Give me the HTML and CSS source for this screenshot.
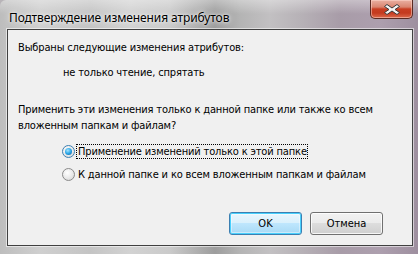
FILE: index.html
```html
<!DOCTYPE html>
<html lang="ru">
<head>
<meta charset="utf-8">
<link rel="stylesheet" href="styles.css">
</head>
<body>
<div class="window">
  <div class="titlebar">
    <span class="title">Подтверждение изменения атрибутов</span>
    <div class="close">
      <svg width="20" height="13" viewBox="0 0 20 13">
        <path d="M5 1.5 L10 5 L15 1.5 L17.5 3.5 L13 6.5 L17.5 9.5 L15 11.5 L10 8 L5 11.5 L2.5 9.5 L7 6.5 L2.5 3.5 Z" fill="#f4f4f4" stroke="#3a3a3a" stroke-width="1" stroke-linejoin="round"/>
      </svg>
    </div>
  </div>
  <div class="client">
    <p class="line first">Выбраны следующие изменения атрибутов:</p>
    <p class="line attrs">не только чтение, спрятать</p>
    <p class="line question">Применить эти изменения только к данной папке или также ко всем<br>вложенным папкам и файлам?</p>
    <div class="radios">
      <div class="radio">
        <span class="circle checked"></span>
        <span class="label focused">Применение изменений только к этой папке</span>
      </div>
      <div class="radio">
        <span class="circle"></span>
        <span class="label">К данной папке и ко всем вложенным папкам и файлам</span>
      </div>
    </div>
    <div class="buttons">
      <div class="btn default">OK</div>
      <div class="btn">Отмена</div>
    </div>
  </div>
</div>
</body>
</html>
```
FILE: styles.css
```css
html, body {
  margin: 0;
  padding: 0;
}
body {
  width: 418px;
  height: 254px;
  overflow: hidden;
  background: #b8b4b8;
}
.window {
  box-sizing: border-box;
  width: 418px;
  height: 254px;
  padding: 0 5px 8px 7px;
  display: flex;
  flex-direction: column;
  background:
    linear-gradient(180deg, rgba(255,255,255,0.35) 0px, rgba(255,255,255,0) 14px),
    linear-gradient(90deg, #bdbdbd 0px, #cfcfcf 40px, #c4c4c4 90px, #d2d2d2 130px, #cacaca 170px, #9d9d9d 215px, #b4b4b4 240px, #c2c0c2 270px, #b7b2b7 300px, #a89ca8 340px, #ad9fae 380px, #9e8f9f 418px);
  border-radius: 6px 6px 0 0;
}
.titlebar {
  height: 29px;
  display: flex;
  justify-content: space-between;
  align-items: flex-start;
}
.title {
  font-family: "Noto Sans", sans-serif;
  font-size: 12px;
  color: #000;
  margin: 9px 0 0 2px;
  text-shadow: 0 0 6px rgba(255,255,255,0.9), 0 0 3px rgba(255,255,255,0.9);
  letter-spacing: -0.1px;
}
.close {
  width: 43px;
  height: 19px;
  box-sizing: border-box;
  border: 1px solid #5a2a22;
  border-top: none;
  border-radius: 0 0 5px 5px;
  background: linear-gradient(180deg, #eab0a2 0px, #d98570 7px, #c83e22 9px, #c43a1f 13px, #dc6a4c 18px);
  box-shadow: inset 0 0 0 1px rgba(255,220,210,0.5);
  display: flex;
  align-items: center;
  justify-content: center;
}
.close svg {
  display: block;
}
.client {
  flex: 1;
  background: #f0f0f0;
  border: 1px solid #404040;
  box-shadow: 0 0 0 1px rgba(255,255,255,0.55);
  font-family: "DejaVu Sans Condensed", "Liberation Sans", sans-serif;
  font-size: 11px;
  letter-spacing: -0.15px;
  color: #000;
  position: relative;
}
.line {
  margin: 0;
  line-height: 13px;
  white-space: nowrap;
}
.first {
  padding: 11px 0 0 10px;
}
.attrs {
  padding: 12px 0 0 55px;
}
.question {
  padding: 23px 10px 0 10px;
  line-height: 16px;
}
.radios {
  padding: 10px 0 0 54px;
  display: flex;
  flex-direction: column;
  gap: 8px;
}
.radio {
  display: flex;
  align-items: center;
  height: 15px;
}
.circle {
  width: 11px;
  height: 11px;
  border-radius: 50%;
  border: 1px solid #8a8a8a;
  background: radial-gradient(circle at 40% 35%, #ffffff 0%, #e8e8e8 55%, #cfcfcf 100%);
  margin-right: 1px;
  position: relative;
  flex: none;
}
.circle.checked {
  border-color: #3c7fb1;
}
.circle.checked::after {
  content: "";
  position: absolute;
  left: 2px;
  top: 2px;
  width: 7px;
  height: 7px;
  border-radius: 50%;
  background: radial-gradient(circle at 40% 35%, #a6e4ff 0%, #2aa6e6 50%, #0b5a9c 100%);
}
.label {
  padding: 0 0 0 1px;
  border: 1px solid transparent;
  line-height: 13px;
  white-space: nowrap;
}
.label.focused {
  border: 1px dotted #000;
}
.buttons {
  position: absolute;
  right: 29px;
  bottom: 10px;
  display: flex;
  gap: 8px;
}
.btn {
  box-sizing: border-box;
  width: 73px;
  height: 23px;
  border: 1px solid #707070;
  border-radius: 3px;
  background: linear-gradient(180deg, #f2f2f2 0%, #ebebeb 48%, #dddddd 50%, #cfcfcf 100%);
  box-shadow: inset 0 0 0 1px rgba(255,255,255,0.8);
  display: flex;
  align-items: center;
  justify-content: center;
  line-height: 13px;
  letter-spacing: 0;
}
.btn.default {
  border-color: #3c7fb1;
  background: linear-gradient(180deg, #eaf6fd 0%, #d9f0fc 48%, #bee6fd 50%, #a7d9f5 100%);
  box-shadow: inset 0 0 0 1px #48d0fd, inset 0 0 0 2px rgba(255,255,255,0.4);
}
```
